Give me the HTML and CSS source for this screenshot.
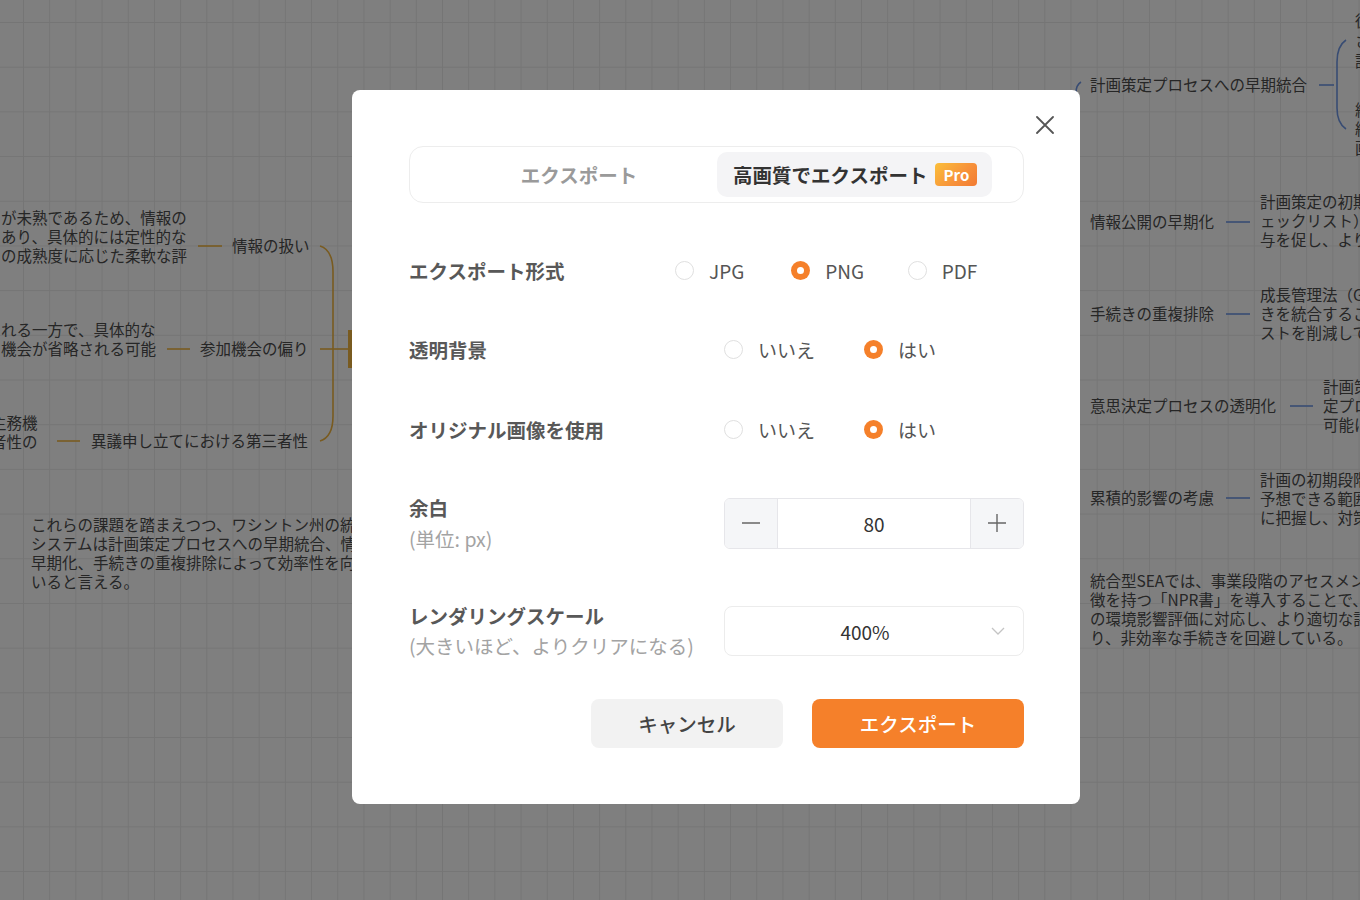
FILE: index.html
```html
<!DOCTYPE html>
<html lang="ja">
<head>
<meta charset="utf-8">
<title>エクスポート</title>
<link rel="stylesheet" href="styles.css">
</head>
<body>
<div class="canvas">
  <svg class="links" width="1360" height="900" viewBox="0 0 1360 900">
    <g class="orange" fill="none" stroke-width="1.6">
      <line x1="198" y1="246" x2="222" y2="246"/>
      <line x1="167" y1="349" x2="190" y2="349"/>
      <line x1="57" y1="441" x2="80" y2="441"/>
      <path d="M320 246 Q333 250 333 272 L333 416 Q333 437 320 441"/>
      <line x1="320" y1="349" x2="352" y2="349"/>
      <line x1="350" y1="330" x2="350" y2="368" stroke-width="4"/>
    </g>
    <g class="blue" fill="none" stroke-width="1.6">
      <path d="M1081 82 Q1076 85 1076 93"/>
      <line x1="1319" y1="85" x2="1334" y2="85"/>
      <path d="M1346 40 Q1337 46 1337 62 L1337 108 Q1337 123 1346 129"/>
      <line x1="1226" y1="222" x2="1250" y2="222"/>
      <line x1="1226" y1="314" x2="1250" y2="314"/>
      <line x1="1290" y1="406" x2="1313" y2="406"/>
      <line x1="1226" y1="498" x2="1250" y2="498"/>
    </g>
  </svg>

  <div class="node ta">が未熟であるため、情報の<br>あり、具体的には定性的な<br>の成熟度に応じた柔軟な評</div>
  <div class="node na">情報の扱い</div>
  <div class="node tb">れる一方で、具体的な<br>機会が省略される可能</div>
  <div class="node nb">参加機会の偏り</div>
  <div class="node tc">主務機<br>者性の</div>
  <div class="node nc">異議申し立てにおける第三者性</div>
  <div class="node pd">これらの課題を踏まえつつ、ワシントン州の統<br>システムは計画策定プロセスへの早期統合、情<br>早期化、手続きの重複排除によって効率性を向<br>いると言える。</div>

  <div class="node r1">計画策定プロセスへの早期統合</div>
  <div class="node r1a">従<br>さ<br>討</div>
  <div class="node r1b">統<br>結<br>画</div>
  <div class="node r2">情報公開の早期化</div>
  <div class="node r2t">計画策定の初期<br>ェックリスト）<br>与を促し、より</div>
  <div class="node r3">手続きの重複排除</div>
  <div class="node r3t">成長管理法（G<br>きを統合するこ<br>ストを削減して</div>
  <div class="node r4">意思決定プロセスの透明化</div>
  <div class="node r4t">計画策<br>定プロ<br>可能に</div>
  <div class="node r5">累積的影響の考慮</div>
  <div class="node r5t">計画の初期段階<br>予想できる範囲<br>に把握し、対策</div>
  <div class="node r6">統合型SEAでは、事業段階のアセスメン<br>徴を持つ「NPR書」を導入することで、<br>の環境影響評価に対応し、より適切な評<br>り、非効率な手続きを回避している。</div>
</div>

<div class="overlay">
  <div class="dialog">
    <button class="close" aria-label="閉じる">
      <svg width="18" height="18" viewBox="0 0 18 18"><path d="M1 1 L17 17 M17 1 L1 17" stroke="#555" stroke-width="1.8" stroke-linecap="round" fill="none"/></svg>
    </button>

    <div class="tabs">
      <div class="tab">エクスポート</div>
      <div class="tab active"><span class="tab-text">高画質でエクスポート</span><span class="pro">Pro</span></div>
    </div>

    <div class="row row-format">
      <div class="label">エクスポート形式</div>
      <div class="opts opts-format">
        <div class="opt"><span class="radio"></span>JPG</div>
        <div class="opt"><span class="radio on"></span>PNG</div>
        <div class="opt"><span class="radio"></span>PDF</div>
      </div>
    </div>

    <div class="row row-bg">
      <div class="label">透明背景</div>
      <div class="opts opts-yn">
        <div class="opt"><span class="radio"></span>いいえ</div>
        <div class="opt"><span class="radio on"></span>はい</div>
      </div>
    </div>

    <div class="row row-orig">
      <div class="label">オリジナル画像を使用</div>
      <div class="opts opts-yn">
        <div class="opt"><span class="radio"></span>いいえ</div>
        <div class="opt"><span class="radio on"></span>はい</div>
      </div>
    </div>

    <div class="row row-margin">
      <div class="label-block">
        <div class="label">余白</div>
        <div class="sub">(単位: px)</div>
      </div>
      <div class="stepper">
        <div class="step">
          <svg width="18" height="2" viewBox="0 0 18 2"><line x1="0" y1="1" x2="18" y2="1" stroke="#666" stroke-width="1.4"/></svg>
        </div>
        <div class="value">80</div>
        <div class="step">
          <svg width="18" height="18" viewBox="0 0 18 18"><path d="M0 9 H18 M9 0 V18" stroke="#666" stroke-width="1.4" fill="none"/></svg>
        </div>
      </div>
    </div>

    <div class="row row-scale">
      <div class="label-block">
        <div class="label">レンダリングスケール</div>
        <div class="sub">(大きいほど、よりクリアになる)</div>
      </div>
      <div class="select">
        <span class="select-value">400%</span>
        <svg class="chev" width="14" height="8" viewBox="0 0 14 8"><path d="M1 1 L7 7 L13 1" stroke="#c4c4c4" stroke-width="1.3" fill="none"/></svg>
      </div>
    </div>

    <div class="actions">
      <button class="btn cancel">キャンセル</button>
      <button class="btn primary">エクスポート</button>
    </div>
  </div>
</div>
</body>
</html>
```

FILE: styles.css
```css
* { box-sizing: border-box; }

html, body {
  margin: 0;
  padding: 0;
  width: 1360px;
  height: 900px;
  overflow: hidden;
  font-family: "Noto Sans CJK JP", "Noto Sans", sans-serif;
}

.canvas {
  position: relative;
  width: 1360px;
  height: 900px;
  overflow: hidden;
  background-color: #ffffff;
  background-image:
    linear-gradient(to right, #ebebeb 1px, transparent 1px),
    linear-gradient(to bottom, #ebebeb 1px, transparent 1px);
  background-size: 26.2px 44.7px;
  background-position: 23px 22px;
}

.links { position: absolute; left: 0; top: 0; }
.links .orange { stroke: #f2b640; }
.links .blue { stroke: #7098e6; }

.node {
  position: absolute;
  font-size: 15.5px;
  line-height: 19px;
  color: #4c4c4c;
  white-space: nowrap;
}

.ta { left: 1px; top: 208px; }
.na { left: 232px; top: 236px; }
.tb { left: 1px; top: 320px; }
.nb { left: 200px; top: 339px; }
.tc { left: -9px; top: 413px; line-height: 18.5px; }
.nc { left: 91px; top: 431px; }
.pd { left: 31px; top: 515px; }

.r1 { left: 1090px; top: 75px; }
.r1a { left: 1355px; top: 10px; line-height: 20px; }
.r1b { left: 1355px; top: 100px; }
.r2 { left: 1090px; top: 212px; }
.r2t { left: 1260px; top: 192px; }
.r3 { left: 1090px; top: 304px; }
.r3t { left: 1260px; top: 285px; }
.r4 { left: 1090px; top: 396px; }
.r4t { left: 1323px; top: 377px; }
.r5 { left: 1090px; top: 488px; }
.r5t { left: 1260px; top: 470px; }
.r6 { left: 1090px; top: 571px; }

.overlay {
  position: fixed;
  inset: 0;
  background: rgba(0, 0, 0, 0.5);
  display: flex;
  justify-content: center;
  align-items: flex-start;
  padding-top: 90px;
  padding-left: 72px;
}

.dialog {
  position: relative;
  width: 728px;
  height: 714px;
  background: #fff;
  border-radius: 8px;
  padding: 56px 56px 56px 57px;
  display: flex;
  flex-direction: column;
}

.close {
  position: absolute;
  top: 26px;
  right: 26px;
  width: 18px;
  height: 18px;
  padding: 0;
  border: 0;
  background: none;
  display: flex;
}

.tabs {
  height: 57px;
  border: 1px solid #ededed;
  border-radius: 14px;
  padding: 5px;
  display: flex;
  justify-content: center;
}

.tab {
  width: 276px;
  height: 45px;
  border-radius: 10px;
  display: flex;
  align-items: center;
  justify-content: center;
  font-size: 19.5px;
  font-weight: 700;
  color: #9a9a9a;
  white-space: nowrap;
}

.tab.active {
  width: 275px;
  flex: none;
  background: #f4f4f6;
  color: #333;
  padding: 0 0 0 16px;
  justify-content: flex-start;
}

.tab-text { flex: none; }

.pro {
  flex: none;
  margin-left: 8px;
  width: 42px;
  height: 23px;
  border-radius: 4px;
  background: linear-gradient(135deg, #fbbf3a 0%, #f7913a 60%, #f27a32 100%);
  color: #fff;
  font-size: 15px;
  font-weight: 700;
  display: flex;
  align-items: center;
  justify-content: center;
  line-height: 1;
}

.row {
  display: flex;
  align-items: center;
  justify-content: space-between;
}

.row-format { height: 40px; margin-top: 47px; }
.row-bg { height: 40px; margin-top: 39px; }
.row-orig { height: 40px; margin-top: 40px; }
.row-margin { height: 62px; margin-top: 43px; }
.row-scale { height: 60px; margin-top: 47px; }

.label {
  font-size: 19.5px;
  font-weight: 700;
  color: #585858;
  line-height: 31px;
}

.row-scale .label, .row-scale .sub { line-height: 30px; }

.sub {
  font-size: 19.5px;
  color: #a3a3a3;
  line-height: 31px;
}

.opts { display: flex; }
.opts-format { width: 349px; }
.opts-format .opt { width: 116.5px; }
.opts-yn { width: 300px; }
.opts-yn .opt { width: 140px; }

.opt {
  display: flex;
  align-items: center;
  font-size: 19px;
  color: #555;
}

.radio {
  width: 19px;
  height: 19px;
  border-radius: 50%;
  border: 1px solid #e0e0e0;
  background: #fff;
  margin-right: 15px;
  flex: none;
  display: flex;
  align-items: center;
  justify-content: center;
}

.radio.on {
  border: 0;
  background: #f5802a;
}

.radio.on::after {
  content: "";
  width: 7px;
  height: 7px;
  border-radius: 50%;
  background: #fff;
}

.stepper {
  width: 300px;
  height: 51px;
  border: 1px solid #e6e6ea;
  border-radius: 6px;
  display: flex;
  overflow: hidden;
}

.step {
  width: 52px;
  background: #f5f6f8;
  display: flex;
  align-items: center;
  justify-content: center;
}

.value {
  flex: 1;
  border-left: 1px solid #e6e6ea;
  border-right: 1px solid #e6e6ea;
  display: flex;
  align-items: center;
  justify-content: center;
  font-size: 19px;
  color: #333;
}

.select {
  width: 300px;
  height: 50px;
  border: 1px solid #ececec;
  border-radius: 8px;
  display: flex;
  align-items: center;
  padding: 0 18px 0 14px;
}

.select-value {
  flex: 1;
  text-align: center;
  font-size: 19px;
  color: #333;
}

.chev { flex: none; }

.actions {
  margin-top: 38px;
  display: flex;
  justify-content: flex-end;
  gap: 29px;
}

.btn {
  height: 49px;
  border: 0;
  border-radius: 8px;
  font-family: "Noto Sans CJK JP", "Noto Sans", sans-serif;
  font-size: 19.5px;
  font-weight: 500;
  padding: 0;
}

.cancel { width: 192px; background: #f2f2f2; color: #444; }
.primary { width: 212px; background: #f5802a; color: #fff; }
```
